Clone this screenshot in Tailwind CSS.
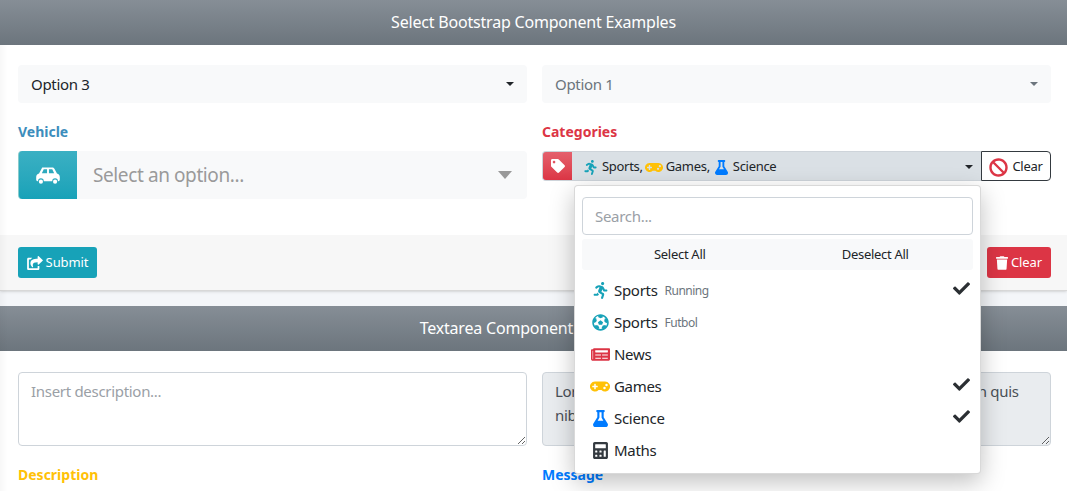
<!DOCTYPE html>
<html lang="en">
<head>
    <meta charset="UTF-8">
    <title>Select Bootstrap Component Examples</title>
    <script src="https://cdn.jsdelivr.net/npm/@tailwindcss/browser@4"></script>
</head>
<body class="relative h-[491px] overflow-hidden bg-[#f4f6f9] font-['Noto_Sans',sans-serif] text-[15px] tracking-[-0.3px] text-[#212529]">

<!-- Select card -->
<section class="h-[291px] bg-white border-b border-[#d8d8d8] shadow-sm">
    <header class="h-[45px] pb-[2px] flex items-center justify-center bg-gradient-to-b from-[#868e96] to-[#6c757d] text-white text-[16px] tracking-[-0.2px]">Select Bootstrap Component Examples</header>
    <div class="h-[190px] pl-[18px] pr-[16px] pt-[20px]">
        <div class="grid grid-cols-2 gap-x-[15px]">
            <div class="h-[38px] flex items-center justify-between pl-[13px] pr-[13px] bg-[#f8f9fa] rounded">
                <span>Option 3</span>
                <span class="border-x-[4px] border-t-[4px] border-x-transparent border-t-[#212529]"></span>
            </div>
            <div class="h-[38px] flex items-center justify-between pl-[13px] pr-[13px] bg-[#f8f9fa] rounded text-[#6c757d]">
                <span>Option 1</span>
                <span class="border-x-[4px] border-t-[4px] border-x-transparent border-t-[#6c757d]"></span>
            </div>
            <div class="mt-[19px]">
                <label class="block h-[19px] mb-[10px] text-[14px] tracking-normal leading-[19px] font-bold text-[#3c8dbc]">Vehicle</label>
                <div class="h-[48px] flex items-center bg-[#f8f9fa] rounded">
                    <span class="w-[59px] h-full flex items-center justify-center rounded-l bg-gradient-to-b from-[#3ab0c3] to-[#17a2b8] border-l border-[#8cc]">
                        <svg class="w-[24px] h-[17px]" viewBox="0 1 25 18" fill="#fff"><path fill-rule="evenodd" d="M7 1.500h10c1 0 1.800.5 2.300 1.400L22 8c1.800.6 3 1.800 3 3.500v3c0 1-.7 1.500-1.500 1.500H23a3 3 0 0 0-6 0H8a3 3 0 0 0-6 0h-.5C.7 16 0 15.500 0 14.500v-3C0 9.800 1.200 8.600 3 8l2.700-5.100C6.200 2 6 1.500 7 1.500zM8 3.500 6 7.500h5.500v-4zm5.500 0v4H19l-2-4z"/><circle cx="5" cy="16.500" r="2.200"/><circle cx="20" cy="16.500" r="2.200"/></svg>
                    </span>
                    <span class="pl-[16px] pt-[1px] flex-1 text-[19px] tracking-[-0.4px] text-[#9a9a9a]">Select an option...</span>
                    <span class="mr-[15px] border-x-[7.500px] border-t-[8px] border-x-transparent border-t-[#999]"></span>
                </div>
            </div>
            <div class="mt-[19px]">
                <label class="block h-[19px] mb-[10px] text-[14px] tracking-normal leading-[19px] font-bold text-[#dc3545]">Categories</label>
                <div class="h-[30px] flex text-[13px]">
                    <span class="w-[30px] flex items-center justify-center rounded-l bg-gradient-to-b from-[#e4606d] to-[#dc3545] border border-[#ced4da] border-r-0">
                        <svg class="w-[14px] h-[14px]" viewBox="0 0 512 512" fill="#fff"><path d="M0 252.118V48C0 21.49 21.49 0 48 0h204.118a48 48 0 0 1 33.941 14.059l211.882 211.882c18.745 18.745 18.745 49.137 0 67.882L293.823 497.941c-18.745 18.745-49.137 18.745-67.882 0L14.059 286.059A48 48 0 0 1 0 252.118zM112 64c-26.51 0-48 21.49-48 48s21.49 48 48 48 48-21.49 48-48-21.49-48-48-48z"/></svg>
                    </span>
                    <div class="flex-1 flex items-center bg-[#dae0e5] border-y border-[#ced4da] pl-[12px] pr-[8px] pt-[2px]">
                        <svg class="w-[13px] h-[15px] mr-[5px]" viewBox="0 0 416 512" fill="#17a2b8"><path d="M272 96c26.51 0 48-21.49 48-48S298.51 0 272 0s-48 21.49-48 48 21.49 48 48 48zM113.69 317.47l-14.8 34.52H32c-17.67 0-32 14.33-32 32s14.33 32 32 32h77.45c19.25 0 36.58-11.44 44.11-29.09l8.79-20.52-10.67-6.3c-17.32-10.23-30.06-25.37-37.99-42.61zM384 223.99h-44.03l-26.06-53.25c-12.5-25.55-35.45-44.23-61.78-50.94l-71.08-21.14c-28.3-6.8-57.77-.55-80.84 17.14l-39.67 30.41c-14.03 10.75-16.69 30.83-5.92 44.86s30.84 16.66 44.86 5.92l39.69-30.41c7.67-5.89 17.44-8 25.27-6.14l14.7 4.37-37.46 87.39c-12.62 29.48-1.31 64.01 26.3 80.31l84.98 50.17-27.47 87.73c-5.28 16.86 4.11 34.81 20.97 40.09 3.19 1 6.41 1.48 9.58 1.48 13.61 0 26.23-8.77 30.52-22.45l31.64-101.06c5.91-20.77-2.89-43.08-21.64-54.39l-61.24-36.14 31.31-78.28 20.27 41.43c8 16.34 24.92 26.89 43.11 26.89H384c17.67 0 32-14.33 32-32s-14.33-31.99-32-31.99z"/></svg>
                        <span>Sports,</span>
                        <svg class="w-[18px] h-[15px] ml-[2px] mr-[3px]" viewBox="0 0 640 512" fill="#ffc107"><path d="M480.07 96H160a160 160 0 1 0 114.24 272h91.52A160 160 0 1 0 480.07 96zM248 268a12 12 0 0 1-12 12h-52v52a12 12 0 0 1-12 12h-24a12 12 0 0 1-12-12v-52H84a12 12 0 0 1-12-12v-24a12 12 0 0 1 12-12h52v-52a12 12 0 0 1 12-12h24a12 12 0 0 1 12 12v52h52a12 12 0 0 1 12 12zm216 76a40 40 0 1 1 40-40 40 40 0 0 1-40 40zm64-96a40 40 0 1 1 40-40 40 40 0 0 1-40 40z"/></svg>
                        <span>Games,</span>
                        <svg class="w-[13px] h-[15px] mx-[5px]" viewBox="0 0 448 512" fill="#007bff"><path d="M437.2 403.5L320 215V64h8c13.3 0 24-10.7 24-24V24c0-13.3-10.7-24-24-24H120c-13.3 0-24 10.7-24 24v16c0 13.3 10.7 24 24 24h8v151L10.8 403.5C-18.5 450.6 15.3 512 70.9 512h306.2c55.7 0 89.4-61.5 60.1-108.5zM137.9 320l48.2-77.6c3.700-5.200 5.800-11.600 5.800-18.400V64h64v160c0 6.900 2.200 13.200 5.800 18.400l48.200 77.600h-172z"/></svg>
                        <span>Science</span>
                        <span class="ml-auto border-x-[4px] border-t-[4px] border-x-transparent border-t-[#212529]"></span>
                    </div>
                    <button class="w-[70px] pt-[2px] flex items-center justify-center gap-[4px] bg-white border border-[#343a40] rounded-r">
                        <svg class="w-[19px] h-[19px]" viewBox="0 0 512 512" fill="#dc3545"><path d="M256 8C119.034 8 8 119.033 8 256s111.034 248 248 248 248-111.034 248-248S392.967 8 256 8zm130.108 117.892c65.448 65.448 70 165.481 20.677 235.637L150.47 105.216c70.204-49.356 170.226-44.735 235.638 20.676zM125.892 386.108c-65.448-65.448-70-165.481-20.677-235.637L361.53 406.784c-70.203 49.356-170.226 44.736-235.638-20.676z"/></svg>
                        <span>Clear</span>
                    </button>
                </div>
            </div>
        </div>
    </div>
    <footer class="h-[55px] pl-[18px] pr-[16px] flex items-center justify-between bg-[#f7f7f7] text-[13px] tracking-[-0.1px] text-white">
        <button class="w-[79px] h-[31px] flex items-center justify-center gap-[3px] rounded-[3px] bg-[#17a2b8]">
            <svg class="w-[16px] h-[14px]" viewBox="0 0 576 512" fill="#fff"><path d="M568.482 177.448L424.479 313.433C409.3 327.768 384 317.14 384 295.985v-71.963c-144.575.97-205.566 35.113-164.775 171.353 4.483 14.973-12.846 26.567-25.006 17.33C155.252 383.105 120 326.488 120 269.339c0-143.937 117.599-172.5 264-173.312V24.012c0-21.174 25.317-31.768 40.479-17.448l144.003 135.988c10.02 9.463 10.028 25.425 0 34.896zM384 379.128V448H64V128h50.916a11.99 11.99 0 0 0 8.646-3.679c14.953-15.539 32.238-27.837 51.101-37.668C186.146 80.737 181.896 64 168.462 64H48C21.49 64 0 85.49 0 112v352c0 26.51 21.49 48 48 48h352c26.51 0 48-21.49 48-48v-88.806c0-8.288-8.197-13.066-15.964-10.151-8.6 3.2-17.6 4.9-26.391 2.622-5.6-1.4-21.645-1.8-21.645 15.463z"/></svg>
            <span>Submit</span>
        </button>
        <button class="w-[64px] h-[31px] flex items-center justify-center gap-[3px] rounded-[3px] bg-[#dc3545]">
            <svg class="w-[12px] h-[14px]" viewBox="0 0 448 512" fill="#fff"><path d="M432 32H312l-9.400-18.700A24 24 0 0 0 281.100 0H166.800a23.720 23.720 0 0 0-21.400 13.300L136 32H16A16 16 0 0 0 0 48v32a16 16 0 0 0 16 16h416a16 16 0 0 0 16-16V48a16 16 0 0 0-16-16zM53.200 467a48 48 0 0 0 47.900 45h245.800a48 48 0 0 0 47.900-45L416 128H32z"/></svg>
            <span>Clear</span>
        </button>
    </footer>
</section>

<!-- Textarea card -->
<section class="mt-[15px] bg-white h-[185px]">
    <header class="h-[45px] pb-[2px] flex items-center justify-center bg-gradient-to-b from-[#868e96] to-[#6c757d] text-white text-[16px] tracking-[-0.2px]">Textarea Component Examples</header>
    <div class="pl-[18px] pr-[16px] pt-[21px] grid grid-cols-2 gap-x-[15px]">
        <div>
            <textarea class="block w-full h-[74px] px-[12px] py-[6px] leading-[24px] border border-[#ced4da] rounded bg-white placeholder:text-[#9aa0a6] outline-none" placeholder="Insert description..."></textarea>
            <label class="block mt-[19px] text-[14px] tracking-normal leading-[19px] font-bold text-[#ffc107]">Description</label>
        </div>
        <div>
            <textarea readonly class="block w-full h-[74px] px-[12px] py-[6px] leading-[24px] border border-[#ced4da] rounded bg-[#e9ecef] text-[#495057] outline-none">Lorem ipsum dolor sit amet, consectetur adipiscing elit, sed non quis
nibh</textarea>
            <label class="block mt-[19px] text-[14px] tracking-normal leading-[19px] font-bold text-[#007bff]">Message</label>
        </div>
    </div>
</section>

<!-- Faint shade along the left edge of the page -->
<div class="absolute left-0 top-[45px] bottom-0 w-[8px] bg-gradient-to-r from-black/[0.03] to-transparent"></div>

<!-- Open dropdown menu -->
<div class="absolute left-[574px] top-[185px] w-[407px] h-[289px] bg-white border border-black/15 rounded shadow-[0_8px_24px_rgba(0,0,0,0.25)] px-[7px] pt-[11px]">
    <input class="block w-full h-[38px] px-[12px] border border-[#ced4da] rounded placeholder:text-[#9aa0a6] outline-none" placeholder="Search...">
    <div class="mt-[4px] pt-[1px] h-[31px] grid grid-cols-2 place-items-center bg-[#f8f9fa] rounded-[3px] text-[13px]">
        <span>Select All</span>
        <span>Deselect All</span>
    </div>
    <ul class="mt-[4px] -mx-[7px]">
        <li class="h-[32px] flex items-center pl-[15px] pr-[10px]">
            <span class="w-[20px] mr-[4px] flex justify-center"><svg class="w-[15px] h-[17px]" viewBox="0 0 416 512" fill="#17a2b8"><path d="M272 96c26.51 0 48-21.49 48-48S298.51 0 272 0s-48 21.49-48 48 21.49 48 48 48zM113.69 317.47l-14.8 34.52H32c-17.67 0-32 14.33-32 32s14.33 32 32 32h77.45c19.25 0 36.58-11.44 44.11-29.09l8.79-20.52-10.67-6.3c-17.32-10.23-30.06-25.37-37.99-42.61zM384 223.99h-44.03l-26.06-53.25c-12.5-25.55-35.45-44.23-61.78-50.94l-71.08-21.14c-28.3-6.8-57.77-.55-80.84 17.14l-39.67 30.41c-14.03 10.75-16.69 30.83-5.92 44.86s30.84 16.66 44.86 5.92l39.69-30.41c7.67-5.89 17.44-8 25.27-6.14l14.7 4.37-37.46 87.39c-12.62 29.48-1.31 64.01 26.3 80.31l84.98 50.17-27.47 87.73c-5.28 16.86 4.11 34.81 20.97 40.09 3.19 1 6.41 1.48 9.58 1.48 13.61 0 26.23-8.77 30.52-22.45l31.64-101.06c5.91-20.77-2.89-43.08-21.64-54.39l-61.24-36.14 31.31-78.28 20.27 41.43c8 16.34 24.92 26.89 43.11 26.89H384c17.67 0 32-14.33 32-32s-14.33-31.99-32-31.99z"/></svg></span>
            <span>Sports</span><small class="ml-[7px] pt-[1px] text-[12px] tracking-[-0.5px] text-[#6c757d]">Running</small>
            <svg class="ml-auto mb-[3px] w-[17px] h-[17px]" viewBox="0 0 512 512" fill="#2b2f33"><path d="M173.898 439.404l-166.4-166.4c-9.997-9.997-9.997-26.206 0-36.204l36.203-36.204c9.997-9.998 26.207-9.998 36.204 0L192 312.69 432.095 72.596c9.997-9.997 26.207-9.997 36.204 0l36.203 36.204c9.997 9.997 9.997 26.206 0 36.204l-294.4 294.401c-9.998 9.997-26.207 9.997-36.204-.001z"/></svg>
        </li>
        <li class="h-[32px] flex items-center pl-[15px] pr-[10px]">
            <span class="w-[20px] mr-[4px] flex justify-center"><svg class="w-[17px] h-[17px]" viewBox="0 0 512 512" fill="#17a2b8"><path fill-rule="evenodd" d="M504 256c0 136.967-111.033 248-248 248S8 392.967 8 256 119.033 8 256 8s248 111.033 248 248zm-48 0l-.003-.282-26.064 22.741-62.679-58.5 16.454-84.355 34.291 3.062c-24.812-34.158-60.11-60.194-101.25-73.212l13.641 31.868L256 129.999l-75.389-41.677 13.642-31.868c-41.143 13.018-76.438 39.054-101.25 73.212l34.291-3.062 16.454 84.355-62.679 58.5-26.064-22.741-.003.282c0 43.222 13.158 84.636 38.52 120.965l7.704-33.881 85.078 10.442 36.229 77.896-29.769 17.681c39.948 13 85.326 13 125.27 0l-29.769-17.681 36.229-77.896 85.078-10.442 7.704 33.881C442.842 340.636 456 299.222 456 256zm-248.059 69.801l-29.071-79.062L256 190.504l77.13 56.235-29.071 79.062h-96.118z"/></svg></span>
            <span>Sports</span><small class="ml-[7px] pt-[1px] text-[12px] tracking-[-0.5px] text-[#6c757d]">Futbol</small>
        </li>
        <li class="h-[32px] flex items-center pl-[15px] pr-[10px]">
            <span class="w-[20px] mr-[4px] flex justify-center"><svg class="w-[19px] h-[17px] shrink-0" viewBox="0 0 576 512" fill="#dc3545"><path d="M552 64H88c-13.255 0-24 10.745-24 24v8H24c-13.255 0-24 10.745-24 24v272c0 30.928 25.072 56 56 56h472c26.51 0 48-21.49 48-48V88c0-13.255-10.745-24-24-24zM56 400a8 8 0 0 1-8-8V144h16v248a8 8 0 0 1-8 8zm236-16H140c-6.627 0-12-5.373-12-12v-8c0-6.627 5.373-12 12-12h152c6.627 0 12 5.373 12 12v8c0 6.627-5.373 12-12 12zm208 0H348c-6.627 0-12-5.373-12-12v-8c0-6.627 5.373-12 12-12h152c6.627 0 12 5.373 12 12v8c0 6.627-5.373 12-12 12zm-208-96H140c-6.627 0-12-5.373-12-12v-8c0-6.627 5.373-12 12-12h152c6.627 0 12 5.373 12 12v8c0 6.627-5.373 12-12 12zm208 0H348c-6.627 0-12-5.373-12-12v-8c0-6.627 5.373-12 12-12h152c6.627 0 12 5.373 12 12v8c0 6.627-5.373 12-12 12zm0-96H140c-6.627 0-12-5.373-12-12v-40c0-6.627 5.373-12 12-12h360c6.627 0 12 5.373 12 12v40c0 6.627-5.373 12-12 12z"/></svg></span>
            <span>News</span>
        </li>
        <li class="h-[32px] flex items-center pl-[15px] pr-[10px]">
            <span class="w-[20px] mr-[4px] flex justify-center"><svg class="w-[20px] h-[17px] shrink-0" viewBox="0 0 640 512" fill="#ffc107"><path d="M480.07 96H160a160 160 0 1 0 114.24 272h91.52A160 160 0 1 0 480.07 96zM248 268a12 12 0 0 1-12 12h-52v52a12 12 0 0 1-12 12h-24a12 12 0 0 1-12-12v-52H84a12 12 0 0 1-12-12v-24a12 12 0 0 1 12-12h52v-52a12 12 0 0 1 12-12h24a12 12 0 0 1 12 12v52h52a12 12 0 0 1 12 12zm216 76a40 40 0 1 1 40-40 40 40 0 0 1-40 40zm64-96a40 40 0 1 1 40-40 40 40 0 0 1-40 40z"/></svg></span>
            <span>Games</span>
            <svg class="ml-auto mb-[3px] w-[17px] h-[17px]" viewBox="0 0 512 512" fill="#2b2f33"><path d="M173.898 439.404l-166.4-166.4c-9.997-9.997-9.997-26.206 0-36.204l36.203-36.204c9.997-9.998 26.207-9.998 36.204 0L192 312.69 432.095 72.596c9.997-9.997 26.207-9.997 36.204 0l36.203 36.204c9.997 9.997 9.997 26.206 0 36.204l-294.4 294.401c-9.998 9.997-26.207 9.997-36.204-.001z"/></svg>
        </li>
        <li class="h-[32px] flex items-center pl-[15px] pr-[10px]">
            <span class="w-[20px] mr-[4px] flex justify-center"><svg class="w-[15px] h-[17px]" viewBox="0 0 448 512" fill="#007bff"><path d="M437.2 403.5L320 215V64h8c13.3 0 24-10.7 24-24V24c0-13.3-10.7-24-24-24H120c-13.3 0-24 10.7-24 24v16c0 13.3 10.7 24 24 24h8v151L10.8 403.5C-18.5 450.6 15.3 512 70.9 512h306.2c55.7 0 89.4-61.5 60.1-108.5zM137.9 320l48.2-77.6c3.700-5.200 5.800-11.600 5.800-18.400V64h64v160c0 6.900 2.200 13.200 5.800 18.400l48.200 77.600h-172z"/></svg></span>
            <span>Science</span>
            <svg class="ml-auto mb-[3px] w-[17px] h-[17px]" viewBox="0 0 512 512" fill="#2b2f33"><path d="M173.898 439.404l-166.4-166.4c-9.997-9.997-9.997-26.206 0-36.204l36.203-36.204c9.997-9.998 26.207-9.998 36.204 0L192 312.69 432.095 72.596c9.997-9.997 26.207-9.997 36.204 0l36.203 36.204c9.997 9.997 9.997 26.206 0 36.204l-294.4 294.401c-9.998 9.997-26.207 9.997-36.204-.001z"/></svg>
        </li>
        <li class="h-[32px] flex items-center pl-[15px] pr-[10px]">
            <span class="w-[20px] mr-[4px] flex justify-center"><svg class="w-[15px] h-[17px]" viewBox="0 0 448 512" fill="#343a40"><path d="M400 0H48C22.400 0 0 22.400 0 48v416c0 25.600 22.400 48 48 48h352c25.600 0 48-22.400 48-48V48c0-25.600-22.400-48-48-48zM128 435c0 6.400-6.400 12.800-12.800 12.800H76.800c-6.400 0-12.800-6.400-12.800-12.800v-38.400c0-6.400 6.400-12.800 12.800-12.800h38.400c6.400 0 12.800 6.400 12.800 12.800V435zm0-128c0 6.400-6.400 12.800-12.800 12.800H76.800c-6.400 0-12.800-6.400-12.800-12.800v-38.400c0-6.400 6.400-12.800 12.800-12.800h38.400c6.400 0 12.800 6.400 12.800 12.800V307zm128 128c0 6.400-6.400 12.800-12.800 12.800h-38.400c-6.400 0-12.800-6.400-12.800-12.800v-38.400c0-6.400 6.400-12.800 12.800-12.800h38.400c6.400 0 12.800 6.400 12.800 12.800V435zm0-128c0 6.400-6.400 12.800-12.800 12.800h-38.400c-6.400 0-12.800-6.400-12.800-12.800v-38.400c0-6.400 6.400-12.800 12.800-12.800h38.400c6.400 0 12.800 6.400 12.800 12.800V307zm128 128c0 6.400-6.400 12.800-12.800 12.800h-38.400c-6.400 0-12.800-6.400-12.800-12.800V268.800c0-6.400 6.400-12.800 12.800-12.800h38.400c6.400 0 12.800 6.400 12.800 12.800V435zm0-256c0 6.400-6.400 12.800-12.800 12.800H76.800c-6.400 0-12.800-6.400-12.800-12.800V76.800C64 70.400 70.400 64 76.800 64h294.400c6.400 0 12.800 6.400 12.800 12.800V179z"/></svg></span>
            <span>Maths</span>
        </li>
    </ul>
</div>

</body>
</html>
